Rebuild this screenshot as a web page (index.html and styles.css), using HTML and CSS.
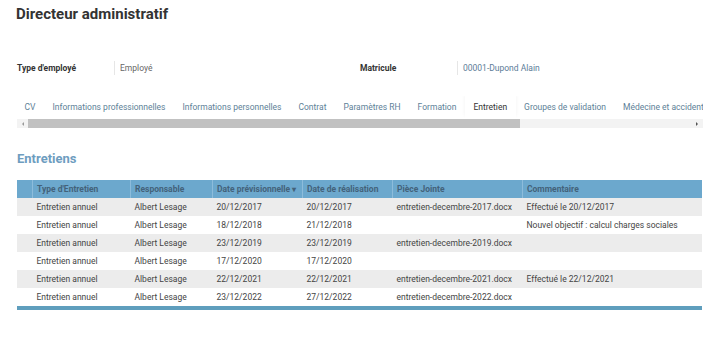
FILE: index.html
```html
<!DOCTYPE html>
<html lang="fr">
<head>
  <meta charset="UTF-8">
  <title>Directeur administratif</title>
  <link rel="stylesheet" href="styles.css">
</head>
<body>
  <div class="page">
    <h1>Directeur administratif</h1>

    <!-- Employee summary -->
    <div class="info-row">
      <div class="field">
        <span class="field-label">Type d'employé</span>
        <span class="field-value">Employé</span>
      </div>
      <div class="field">
        <span class="field-label">Matricule</span>
        <span class="field-value link">00001-Dupond Alain</span>
      </div>
    </div>

    <!-- Tabs -->
    <div class="tabs">
      <span class="tab">CV</span>
      <span class="tab">Informations professionnelles</span>
      <span class="tab">Informations personnelles</span>
      <span class="tab">Contrat</span>
      <span class="tab">Paramètres RH</span>
      <span class="tab">Formation</span>
      <span class="tab active">Entretien</span>
      <span class="tab">Groupes de validation</span>
      <span class="tab">Médecine et accident</span>
    </div>
    <div class="scrollbar">
      <span class="scroll-btn left"></span>
      <span class="scroll-thumb"></span>
      <span class="scroll-track"></span>
      <span class="scroll-btn right"></span>
    </div>

    <h2>Entretiens</h2>

    <table class="grid">
      <thead>
        <tr>
          <th class="col-sel"></th>
          <th class="col-type">Type d'Entretien</th>
          <th class="col-resp">Responsable</th>
          <th class="col-date">Date prévisionnelle <span class="sort">▾</span></th>
          <th class="col-date">Date de réalisation</th>
          <th class="col-file">Pièce Jointe</th>
          <th>Commentaire</th>
        </tr>
      </thead>
      <tbody>
        <tr>
          <td></td><td>Entretien annuel</td><td>Albert Lesage</td><td>20/12/2017</td><td>20/12/2017</td><td>entretien-decembre-2017.docx</td><td>Effectué le 20/12/2017</td>
        </tr>
        <tr>
          <td></td><td>Entretien annuel</td><td>Albert Lesage</td><td>18/12/2018</td><td>21/12/2018</td><td></td><td>Nouvel objectif : calcul charges sociales</td>
        </tr>
        <tr>
          <td></td><td>Entretien annuel</td><td>Albert Lesage</td><td>23/12/2019</td><td>23/12/2019</td><td>entretien-decembre-2019.docx</td><td></td>
        </tr>
        <tr>
          <td></td><td>Entretien annuel</td><td>Albert Lesage</td><td>17/12/2020</td><td>17/12/2020</td><td></td><td></td>
        </tr>
        <tr>
          <td></td><td>Entretien annuel</td><td>Albert Lesage</td><td>22/12/2021</td><td>22/12/2021</td><td>entretien-decembre-2021.docx</td><td>Effectué le 22/12/2021</td>
        </tr>
        <tr>
          <td></td><td>Entretien annuel</td><td>Albert Lesage</td><td>23/12/2022</td><td>27/12/2022</td><td>entretien-decembre-2022.docx</td><td></td>
        </tr>
      </tbody>
    </table>
  </div>
</body>
</html>
```

FILE: styles.css
```css
body {
  margin: 0;
  background: #fff;
  font-family: Roboto, "Liberation Sans", Arial, sans-serif;
  color: #444;
}

.page {
  width: 686px;
  padding: 5px 0 0 17px;
}

h1 {
  margin: 0 0 0 -1px;
  font-size: 15px;
  line-height: 18px;
  font-weight: 700;
  color: #333;
}

/* Employee summary */
.info-row {
  display: flex;
  margin-top: 37px;
  height: 16px;
  align-items: center;
}

.field {
  display: flex;
  align-items: center;
  width: 343px;
  font-size: 8.5px;
}

.field-label {
  width: 97px;
  font-weight: 700;
  color: #333;
  border-right: 1px solid #e6e6e6;
  line-height: 14px;
}

.field-value {
  padding-left: 5px;
  color: #666;
}

.field-value.link {
  color: #5c7c98;
}

/* Tabs */
.tabs {
  display: flex;
  margin-top: 20px;
  margin-left: -1px;
  height: 22px;
  white-space: nowrap;
  overflow: hidden;
}

.tab {
  padding: 0 8.5px;
  font-size: 8.5px;
  line-height: 22px;
  color: #5e7f98;
}

.tab.active {
  color: #333;
  background: #fff;
  box-shadow: 0 -2px 4px rgba(0, 0, 0, 0.05);
}

.scrollbar {
  display: flex;
  height: 9px;
  margin-top: 1px;
  background: #f3f3f3;
}

.scroll-btn {
  width: 11px;
  position: relative;
}

.scroll-btn.left:before,
.scroll-btn.right:before {
  content: "";
  position: absolute;
  top: 2.5px;
  border: 2px solid transparent;
}

.scroll-btn.left:before {
  left: 3px;
  border-right-color: #999;
}

.scroll-btn.right:before {
  right: 3px;
  border-left-color: #555;
}

.scroll-thumb {
  width: 492px;
  background: #c1c1c1;
}

.scroll-track {
  flex: 1;
}

h2 {
  margin: 22px 0 12px;
  font-size: 13px;
  line-height: 18px;
  font-weight: 700;
  color: #6e9dbf;
}

/* Interviews table */
.grid {
  width: 685px;
  border-collapse: collapse;
  table-layout: fixed;
  font-size: 8.5px;
  border-bottom: 4px solid #5f9ebd;
}

.grid th {
  height: 18px;
  padding: 0 4px;
  text-align: left;
  font-weight: 700;
  color: #43627a;
  background: #6ca8cd;
  border-left: 1px solid #8dbcdb;
  white-space: nowrap;
  overflow: hidden;
}

.grid th:first-child {
  border-left: none;
}

.grid td {
  height: 18px;
  padding: 0 4px;
  color: #444;
  white-space: nowrap;
  overflow: hidden;
}

.grid tbody tr:nth-child(odd) td {
  background: #ececec;
}

/* widths are content widths: cell padding adds 8px */
.col-sel { width: 7px; }
.col-type { width: 89px; }
.col-resp { width: 73px; }
.col-date { width: 81px; }
.col-file { width: 121px; }

.sort {
  font-size: 8px;
}
```
